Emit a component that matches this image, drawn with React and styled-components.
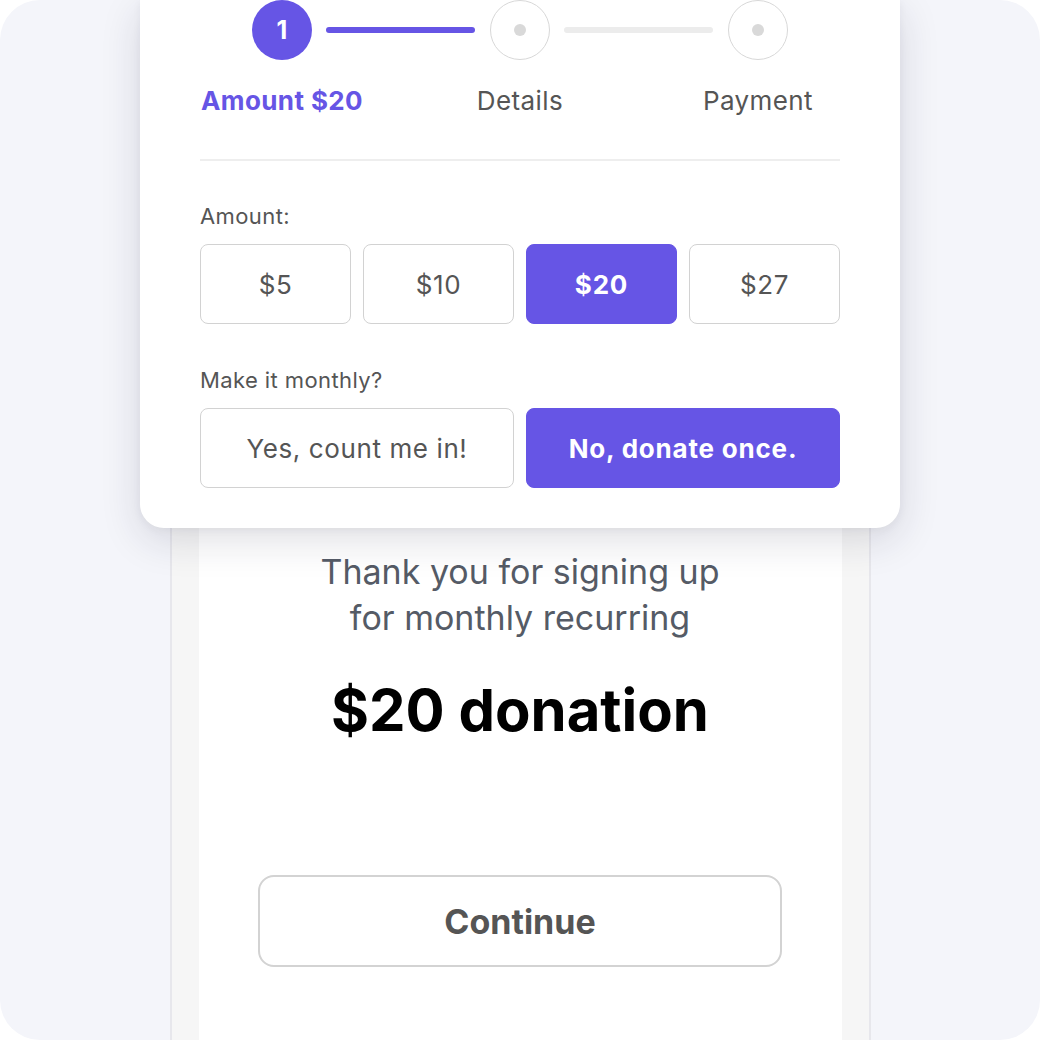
import React from "react";
import styled, { createGlobalStyle } from "styled-components";

const PURPLE = "#6655e5";

const Global = createGlobalStyle`
  html, body { margin: 0; padding: 0; background: #ffffff; }
  * { box-sizing: border-box; }
`;

const Frame = styled.div`
  width: 1040px;
  height: 1040px;
  border-radius: 40px;
  background: #f4f5fa;
  overflow: hidden;
  position: relative;
  display: flex;
  justify-content: center;
`;

const Phone = styled.div`
  width: 701px;
  height: 1040px;
  border-left: 2px solid #e7e7ec;
  border-right: 2px solid #e7e7ec;
  background: #f6f6f6;
  padding: 0 27px;
  display: flex;
`;

const Screen = styled.div`
  flex: 1;
  background: #ffffff;
  display: flex;
  flex-direction: column;
  align-items: center;
  padding-top: 549px;
  font-family: "Inter", "Noto Sans", sans-serif;
`;

const Thanks = styled.p`
  margin: 0;
  font-size: 34px;
  line-height: 46px;
  color: #555b66;
  text-align: center;
`;

const Total = styled.h1`
  margin: 34px 0 0;
  font-size: 58px;
  line-height: 70px;
  font-weight: 700;
  color: #000;
`;

const ContinueButton = styled.button`
  margin-top: 130px;
  width: 524px;
  height: 92px;
  border: 2px solid #d3d3d3;
  border-radius: 16px;
  background: #fff;
  font-family: "Inter", "Noto Sans", sans-serif;
  font-size: 34px;
  font-weight: 700;
  color: #555555;
`;

const Card = styled.div`
  position: absolute;
  left: 140px;
  top: 0;
  width: 760px;
  background: #ffffff;
  border-radius: 0 0 24px 24px;
  box-shadow: 0 12px 40px rgba(30, 30, 60, 0.14), 0 2px 8px rgba(30, 30, 60, 0.05);
  padding: 0 60px 40px;
  font-family: "Inter", "Noto Sans", sans-serif;
  display: flex;
  flex-direction: column;
`;

const StepGrid = styled.div`
  display: grid;
  grid-template-columns: repeat(3, 238px);
  margin: 0 -37px;
  height: ${(p) => p.$h}px;
  align-items: center;
`;

const StepSlot = styled.div`
  display: flex;
  align-items: center;
  justify-content: center;
  position: relative;
  height: 100%;
`;

const Circle = styled.div`
  width: 60px;
  height: 60px;
  border-radius: 50%;
  display: flex;
  align-items: center;
  justify-content: center;
  background: ${(p) => (p.$active ? PURPLE : "#fff")};
  border: ${(p) => (p.$active ? "none" : "1px solid #d8d8d8")};
  color: #fff;
  font-size: 25px;
  font-weight: 700;
`;

const Dot = styled.span`
  width: 12px;
  height: 12px;
  border-radius: 50%;
  background: #d9d9d9;
`;

const Connector = styled.span`
  position: absolute;
  top: 27px;
  left: calc(50% + 44px);
  width: 149px;
  height: 6px;
  border-radius: 3px;
  background: ${(p) => (p.$active ? PURPLE : "#ececec")};
`;

const StepLabel = styled.span`
  font-size: 26px;
  letter-spacing: 0.4px;
  font-weight: ${(p) => (p.$active ? 700 : 400)};
  color: ${(p) => (p.$active ? PURPLE : "#555555")};
  text-align: center;
  white-space: nowrap;
  justify-self: center;
`;

const Divider = styled.hr`
  margin: 19px 0 0;
  border: none;
  height: 2px;
  background: #eeeeee;
`;

const FieldLabel = styled.div`
  font-size: 22px;
  letter-spacing: 0.4px;
  color: #555555;
  margin-top: ${(p) => p.$top}px;
  line-height: 24px;
`;

const OptionRow = styled.div`
  display: grid;
  grid-template-columns: repeat(${(p) => p.$cols}, 1fr);
  gap: 12px;
  margin-top: 16px;
`;

const Option = styled.button`
  height: 80px;
  border-radius: 8px;
  border: 1px solid ${(p) => (p.$selected ? PURPLE : "#d2d2d2")};
  background: ${(p) => (p.$selected ? PURPLE : "#ffffff")};
  color: ${(p) => (p.$selected ? "#ffffff" : "#555555")};
  font-family: "Inter", "Noto Sans", sans-serif;
  font-size: 26px;
  letter-spacing: ${(p) => (p.$selected ? 0.8 : 0.6)}px;
  font-weight: ${(p) => (p.$selected ? 700 : 400)};
`;

export default function App() {
  const amounts = ["$5", "$10", "$20", "$27"];
  return (
    <>
      <Global />
      <Frame>
        <Phone>
          <Screen>
            <Thanks>
              Thank you for signing up
              <br />
              for monthly recurring
            </Thanks>
            <Total>$20 donation</Total>
            <ContinueButton>Continue</ContinueButton>
          </Screen>
        </Phone>
        <Card>
          <StepGrid $h={60}>
            <StepSlot>
              <Circle $active>1</Circle>
              <Connector $active />
            </StepSlot>
            <StepSlot>
              <Circle>
                <Dot />
              </Circle>
              <Connector />
            </StepSlot>
            <StepSlot>
              <Circle>
                <Dot />
              </Circle>
            </StepSlot>
          </StepGrid>
          <StepGrid $h={80}>
            <StepLabel $active>Amount $20</StepLabel>
            <StepLabel>Details</StepLabel>
            <StepLabel>Payment</StepLabel>
          </StepGrid>
          <Divider />
          <FieldLabel $top={43}>Amount:</FieldLabel>
          <OptionRow $cols={4}>
            {amounts.map((a) => (
              <Option key={a} $selected={a === "$20"}>
                {a}
              </Option>
            ))}
          </OptionRow>
          <FieldLabel $top={44}>Make it monthly?</FieldLabel>
          <OptionRow $cols={2}>
            <Option>Yes, count me in!</Option>
            <Option $selected>No, donate once.</Option>
          </OptionRow>
        </Card>
      </Frame>
    </>
  );
}
